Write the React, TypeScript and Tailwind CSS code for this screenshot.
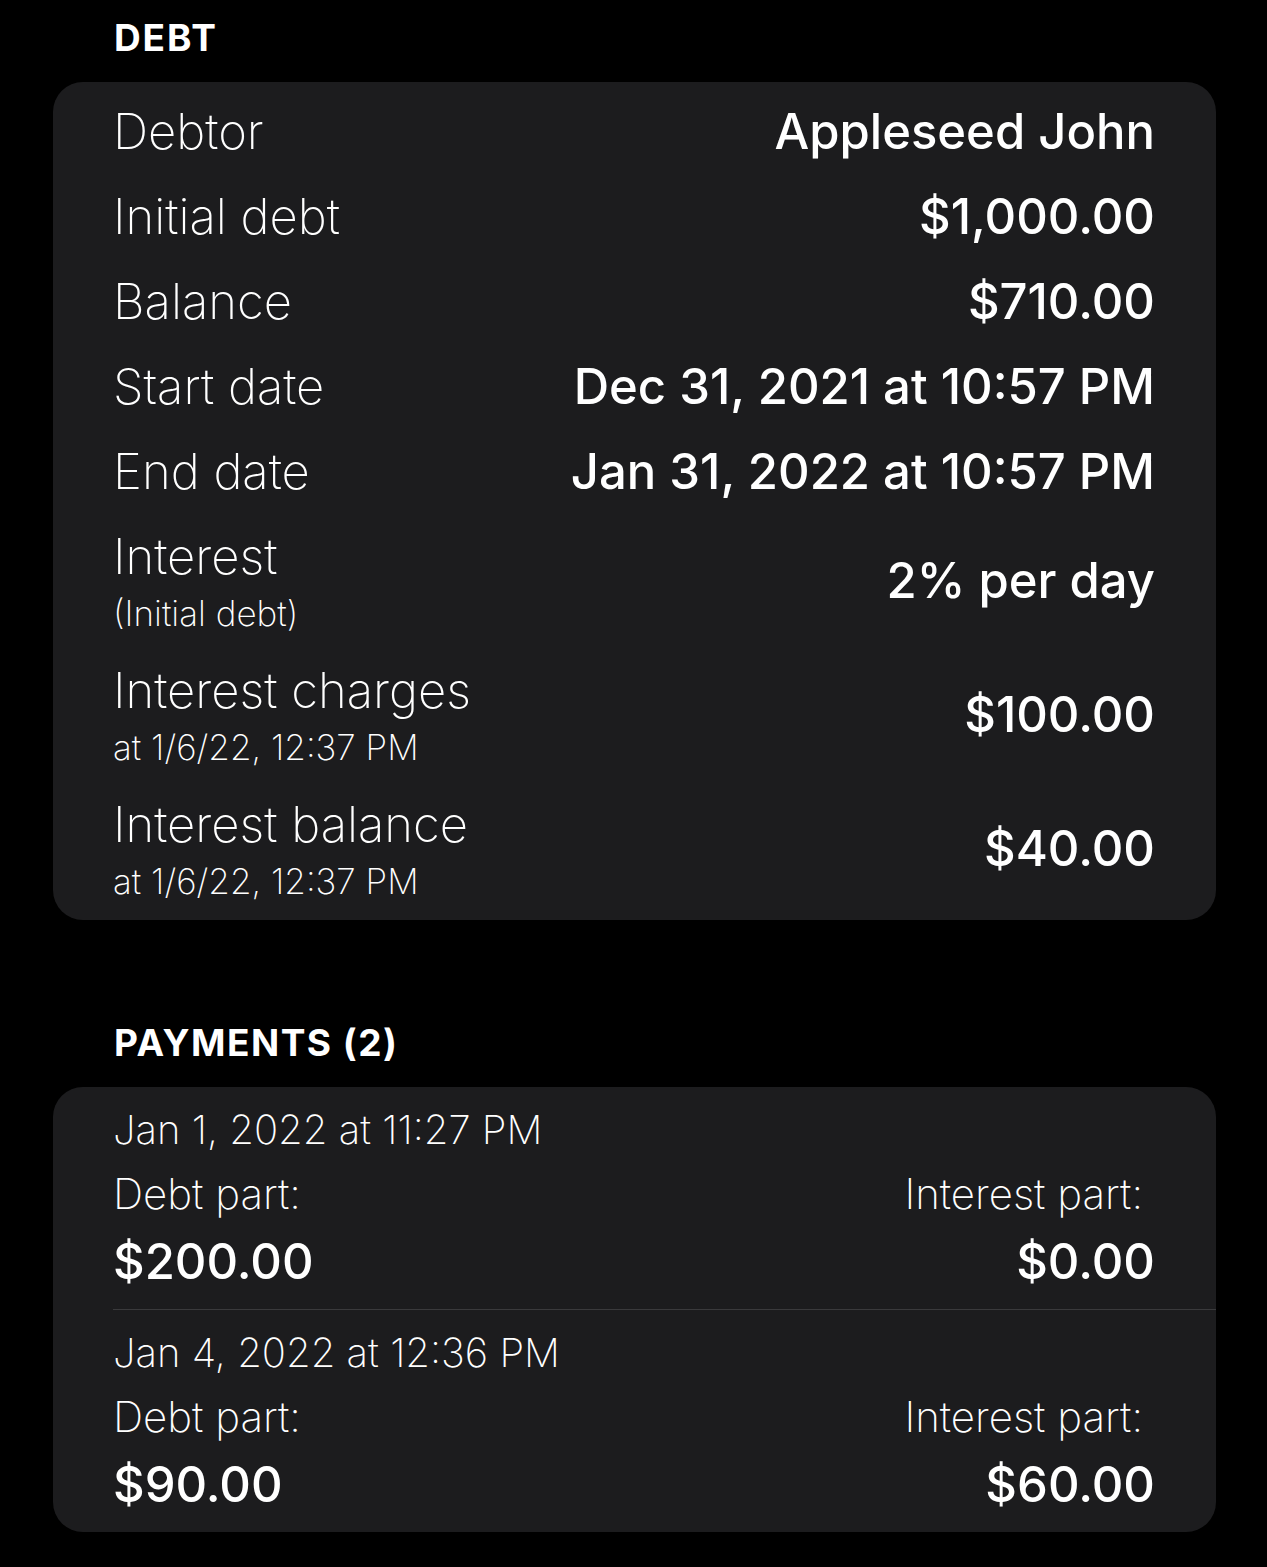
const font = { fontFamily: 'Inter, "Noto Sans", sans-serif' };

type Row = { label: string; value: string; sub?: string };

const rows: Row[] = [
  { label: 'Debtor', value: 'Appleseed John' },
  { label: 'Initial debt', value: '$1,000.00' },
  { label: 'Balance', value: '$710.00' },
  { label: 'Start date', value: 'Dec 31, 2021 at 10:57 PM' },
  { label: 'End date', value: 'Jan 31, 2022 at 10:57 PM' },
  { label: 'Interest', sub: '(Initial debt)', value: '2% per day' },
  { label: 'Interest charges', sub: 'at 1/6/22, 12:37 PM', value: '$100.00' },
  { label: 'Interest balance', sub: 'at 1/6/22, 12:37 PM', value: '$40.00' },
];

const payments = [
  { date: 'Jan 1, 2022 at 11:27 PM', debt: '$200.00', interest: '$0.00' },
  { date: 'Jan 4, 2022 at 12:36 PM', debt: '$90.00', interest: '$60.00' },
];

export default function App() {
  return (
    <div className="w-[1267px] h-[1567px] bg-black text-white overflow-hidden" style={font}>
      {/* Debt section */}
      <div className="h-[82px] pt-[16px] pl-[114px] text-[37px] leading-[44px] font-bold tracking-[0.05em]">DEBT</div>
      <div className="ml-[53px] mr-[51px] rounded-[30px] bg-[#1c1c1e] pl-[60px] pr-[61px] pt-[7px] pb-[4px]">
        {rows.map((r) =>
          r.sub ? (
            <div key={r.label} className="h-[134px] flex items-center justify-between">
              <div className="flex flex-col pt-[12px] pb-[10px] h-full">
                <span className="text-[49px] leading-[62px] font-extralight">{r.label}</span>
                <span className="text-[35px] leading-[50px] font-extralight">{r.sub}</span>
              </div>
              <span className="text-[49px] font-medium">{r.value}</span>
            </div>
          ) : (
            <div key={r.label} className="h-[85px] flex items-center justify-between">
              <span className="text-[49px] font-extralight">{r.label}</span>
              <span className="text-[49px] font-medium">{r.value}</span>
            </div>
          )
        )}
      </div>

      {/* Payments section */}
      <div className="h-[167px] pt-[101px] pl-[114px] text-[37px] leading-[44px] font-bold tracking-[0.04em]">PAYMENTS (2)</div>
      <div className="ml-[53px] mr-[51px] rounded-[30px] bg-[#1c1c1e] overflow-hidden">
        {payments.map((p, i) => (
          <div key={p.date}>
            {i > 0 && <div className="ml-[60px] border-t border-[#3a3a3c]" />}
            <div className="pl-[60px] pr-[61px] pt-[13px] pb-[11px]">
              <div className="h-[60px] leading-[60px] text-[40px] font-extralight">{p.date}</div>
              <div className="h-[66px] flex items-center justify-between text-[42px] font-extralight">
                <span>Debt part:</span>
                <span className="mr-[12px]">Interest part:</span>
              </div>
              <div className="h-[72px] flex items-center justify-between text-[49px] font-medium">
                <span>{p.debt}</span>
                <span>{p.interest}</span>
              </div>
            </div>
          </div>
        ))}
      </div>
    </div>
  );
}
